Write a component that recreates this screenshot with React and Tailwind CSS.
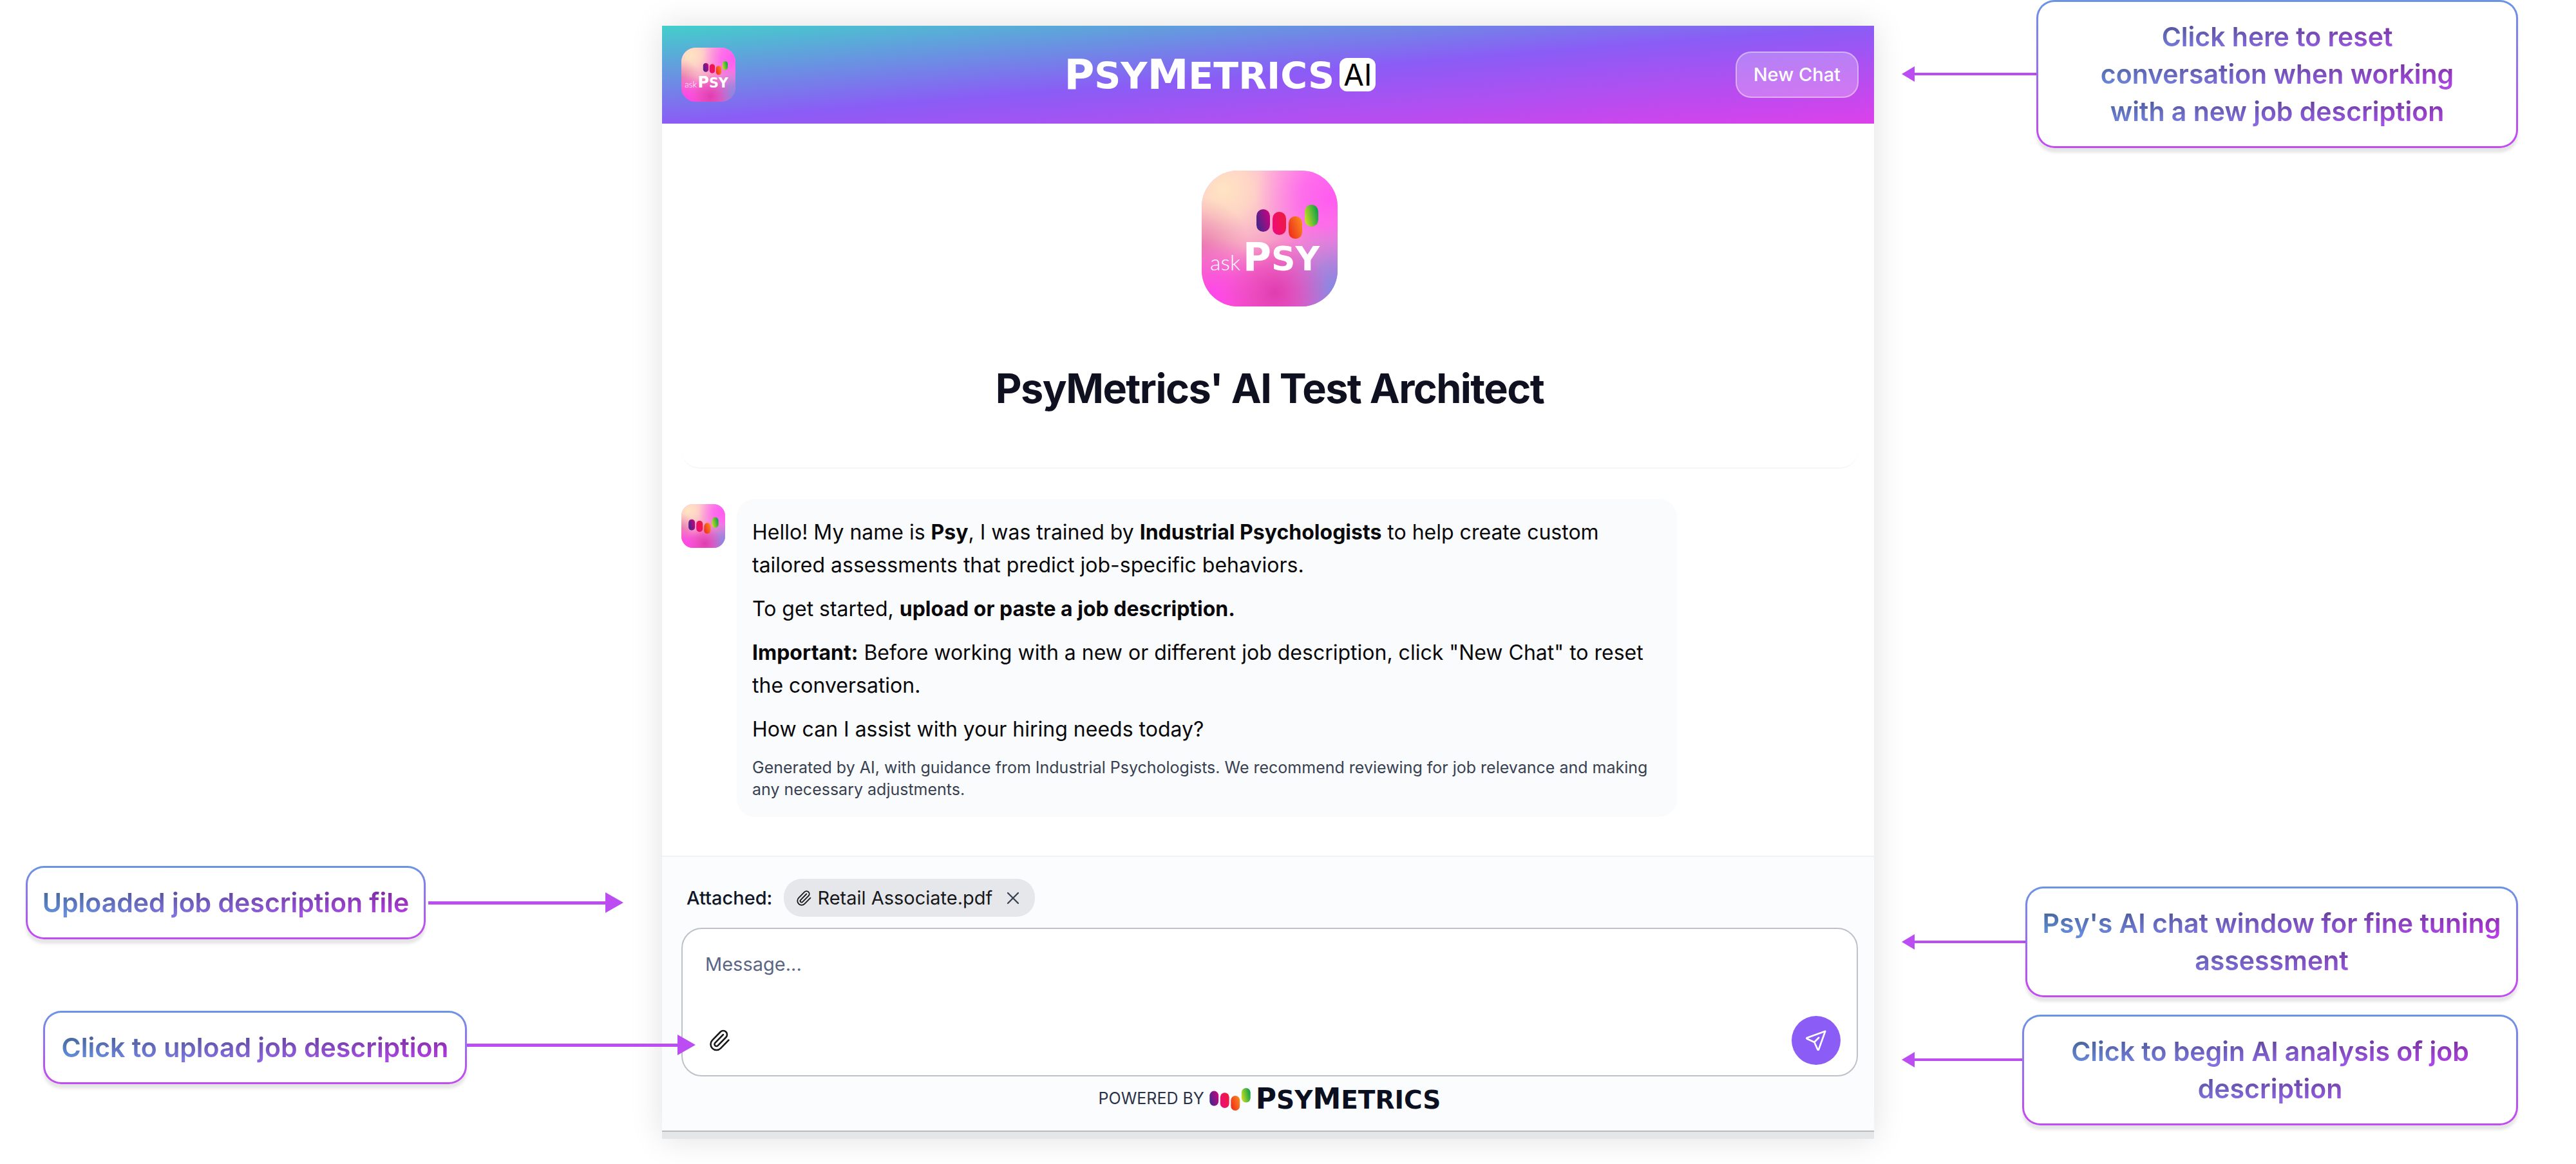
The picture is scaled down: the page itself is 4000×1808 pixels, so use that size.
import { Paperclip, X } from "lucide-react"

const Pills = () => (
  <g>
    <rect x="85" y="60" width="21" height="35" rx="10.5" fill="url(#pillPurple)" />
    <rect x="110" y="64" width="21" height="36" rx="10.5" fill="url(#pillRed)" />
    <rect x="135" y="71" width="21" height="35" rx="10.5" fill="url(#pillOrange)" />
    <rect x="160" y="53" width="21" height="34" rx="10.5" fill="url(#pillGreen)" />
  </g>
)

// gradients shared by every logo on the page
const LogoDefs = () => (
  <svg width="0" height="0" className="absolute" aria-hidden="true">
    <defs>
      <linearGradient id="pillPurple" x1="0" y1="0.8" x2="1" y2="0.3">
        <stop offset="0" stopColor="#3b2a8c" />
        <stop offset="1" stopColor="#c4047f" />
      </linearGradient>
      <linearGradient id="pillRed" x1="0" y1="0.8" x2="1" y2="0.2">
        <stop offset="0" stopColor="#ee0a7c" />
        <stop offset="1" stopColor="#ee1c3c" />
      </linearGradient>
      <linearGradient id="pillOrange" x1="0" y1="0.8" x2="1" y2="0.2">
        <stop offset="0" stopColor="#ee2a1c" />
        <stop offset="1" stopColor="#f98a1e" />
      </linearGradient>
      <linearGradient id="pillGreen" x1="0" y1="0.8" x2="1" y2="0.4">
        <stop offset="0" stopColor="#d3e022" />
        <stop offset="1" stopColor="#0fa047" />
      </linearGradient>
      <linearGradient id="tileBase" x1="0" y1="0" x2="0" y2="1">
        <stop offset="0" stopColor="#fd9be0" />
        <stop offset="0.5" stopColor="#f391c4" />
        <stop offset="1" stopColor="#f84fd0" />
      </linearGradient>
      <radialGradient id="tilePeach" cx="0.16" cy="0.14" r="0.65">
        <stop offset="0" stopColor="#ffe4c2" />
        <stop offset="0.3" stopColor="#ffdcc4" stopOpacity="0.9" />
        <stop offset="1" stopColor="#ffc8d0" stopOpacity="0" />
      </radialGradient>
      <radialGradient id="tilePink" cx="0.95" cy="0.2" r="0.55">
        <stop offset="0" stopColor="#ff5cf0" />
        <stop offset="0.4" stopColor="#ff66ee" stopOpacity="0.85" />
        <stop offset="1" stopColor="#ff7be8" stopOpacity="0" />
      </radialGradient>
      <radialGradient id="tileRose" cx="0" cy="0.55" r="0.35">
        <stop offset="0" stopColor="#e0609f" stopOpacity="0.6" />
        <stop offset="1" stopColor="#e0709f" stopOpacity="0" />
      </radialGradient>
      <radialGradient id="tileCorner" cx="0.08" cy="0.95" r="0.45">
        <stop offset="0" stopColor="#ff45ea" />
        <stop offset="1" stopColor="#ff50e4" stopOpacity="0" />
      </radialGradient>
      <radialGradient id="tileMagenta" cx="0.54" cy="0.9" r="0.4">
        <stop offset="0" stopColor="#df3db0" />
        <stop offset="1" stopColor="#e84bb4" stopOpacity="0" />
      </radialGradient>
      <radialGradient id="tileBlue" cx="1" cy="0.88" r="0.5">
        <stop offset="0" stopColor="#7f8ae2" />
        <stop offset="0.4" stopColor="#9b86e0" stopOpacity="0.8" />
        <stop offset="1" stopColor="#c884e0" stopOpacity="0" />
      </radialGradient>
    </defs>
  </svg>
)

const PsyTile = ({ className, label = true }) => (
  <svg viewBox="0 0 211 211" className={className} role="img" aria-label="askPsy">
    <rect width="211" height="211" rx="56" fill="url(#tileBase)" />
    <rect width="211" height="211" rx="56" fill="url(#tilePeach)" />
    <rect width="211" height="211" rx="56" fill="url(#tilePink)" />
    <rect width="211" height="211" rx="56" fill="url(#tileRose)" />
    <rect width="211" height="211" rx="56" fill="url(#tileCorner)" />
    <rect width="211" height="211" rx="56" fill="url(#tileBlue)" />
    <rect width="211" height="211" rx="56" fill="url(#tileMagenta)" />
    {label ? (
      <>
        <Pills />
        <text x="13" y="155" fill="#fff" fontFamily="Lato, sans-serif" fontWeight="300" fontSize="34">
          ask
        </text>
        <text x="64" y="155" fill="#fff" fontFamily="'DejaVu Sans', sans-serif" fontWeight="700" fontSize="60">
          P<tspan fontSize="52">SY</tspan>
        </text>
      </>
    ) : (
      <g transform="translate(-93 -16) scale(1.5)">
        <Pills />
      </g>
    )}
  </svg>
)

const SendIcon = ({ className }) => (
  <svg
    viewBox="0 0 24 24"
    className={className}
    fill="none"
    stroke="currentColor"
    strokeWidth="1.8"
    strokeLinecap="round"
    strokeLinejoin="round"
    aria-hidden="true"
  >
    <path d="M21.5 2.5 2.6 9.3a.6.6 0 0 0 0 1.1l7.6 3.4 3.4 7.6a.6.6 0 0 0 1.1 0z" />
    <path d="m10.2 13.8 4.6-4.6" />
  </svg>
)

const Wordmark = ({ className, smallClass }) => (
  <span className={`font-['DejaVu_Sans',sans-serif] leading-none font-bold ${className}`}>
    P<span className={smallClass}>SY</span>M<span className={smallClass}>ETRICS</span>
  </span>
)

const Callout = ({ className, children }) => (
  <div
    className={`shrink-0 rounded-[28px] border-3 border-transparent px-4 text-center shadow-[0_7px_4px_rgba(0,0,0,0.1)] [background:linear-gradient(#fff,#fff)_padding-box,linear-gradient(#6b94e3,#8b7be8_35%,#c04df0_90%)_border-box] ${className}`}
  >
    <p className="bg-[linear-gradient(rgba(0,0,0,0.3)_20%,transparent_80%),linear-gradient(to_right,#6295dc,#8b66e0_50%,#b93be6)] bg-[length:100%_58px,100%_100%] bg-clip-text text-[41px] leading-[58px] font-semibold text-transparent">
      {children}
    </p>
  </div>
)

const ArrowLeft = ({ className = "" }) => (
  <div className={`flex flex-1 items-center ${className}`} aria-hidden="true">
    <span className="h-6 w-5 bg-[#bb4df2] [clip-path:polygon(100%_0,0_50%,100%_100%)]" />
    <span className="h-1 flex-1 bg-[#bb4df2]" />
  </div>
)

const ArrowRight = ({ className }) => (
  <div className={`relative z-10 flex flex-1 items-center ${className}`} aria-hidden="true">
    <span className="h-[5px] flex-1 bg-[#bb4df2]" />
    <span className="h-8 w-7 bg-[#bb4df2] [clip-path:polygon(0_0,100%_50%,0_100%)]" />
  </div>
)

const ChatHeader = () => (
  <header className="flex items-center justify-between bg-[linear-gradient(to_bottom_right,#43cfcb,#8b5cf6_50%,#dc40ea)] py-[34px] pr-6 pl-[30px]">
    <PsyTile className="size-[84px]" />
    <div className="flex items-center gap-2 pr-12 text-white">
      <Wordmark className="text-[64px]" smallClass="text-[57px]" />
      <span className="rounded-xl bg-white px-1.5 text-[46px] leading-[52px] text-black">AI</span>
    </div>
    <button
      type="button"
      className="rounded-3xl border-2 border-white/40 bg-white/25 px-[26px] py-4 text-[29px] leading-9 font-medium text-white"
    >
      New Chat
    </button>
  </header>
)

const Message = () => (
  <div className="flex items-start gap-[18px]">
    <PsyTile className="mt-2 size-[68px] shrink-0" label={false} />
    <div className="w-full max-w-[1460px] space-y-[17px] rounded-[28px] bg-[#fafbfd] px-6 py-[26px] text-[32px] leading-[51px] text-[#09090b]">
      <p>
        Hello! My name is <strong>Psy</strong>, I was trained by <strong>Industrial Psychologists</strong> to help
        create custom
        <br />
        tailored assessments that predict job-specific behaviors.
      </p>
      <p>
        To get started, <strong>upload or paste a job description.</strong>
      </p>
      <p>
        <strong>Important:</strong> Before working with a new or different job description, click "New Chat" to reset
        <br />
        the conversation.
      </p>
      <p>How can I assist with your hiring needs today?</p>
      <p className="text-[25px] leading-[34px] text-[#374151]">
        Generated by AI, with guidance from Industrial Psychologists. We recommend reviewing for job relevance and
        making
        <br />
        any necessary adjustments.
      </p>
    </div>
  </div>
)

const Composer = () => (
  <form className="border-t-2 border-b-2 border-t-[#f1f2f5] border-b-[#bbbcba] bg-[#fbfcfe] pt-[34px] pr-[25px] pb-[29px] pl-[30px]">
    <div className="flex items-center gap-[18px] pl-2 text-[29px] leading-[35px]">
      <span className="font-medium text-[#111827]">Attached:</span>
      <div className="flex items-center gap-2 rounded-[28px] bg-[#e5e7eb] px-[18px] py-3 text-[#18181b]">
        <Paperclip className="size-[26px]" strokeWidth={1.7} />
        <span>Retail Associate.pdf</span>
        <button type="button" aria-label="Remove attachment" className="ml-2">
          <X className="size-8 text-[#374151]" strokeWidth={1.7} />
        </button>
      </div>
    </div>
    <div className="mt-[17px] rounded-[32px] border-2 border-[#bfc1c9] bg-white pt-[30px] pr-[25px] pb-4 pl-[35px]">
      <textarea
        rows={2}
        aria-label="Message"
        placeholder="Message..."
        className="block w-full resize-none text-[29px] leading-[50px] outline-none placeholder:text-[#5b6684]"
      />
      <div className="mt-[5px] flex items-center justify-between">
        <button type="button" aria-label="Attach file" className="pl-1">
          <Paperclip className="size-9 text-[#18181b]" strokeWidth={1.7} />
        </button>
        <button
          type="submit"
          aria-label="Send"
          className="flex size-[76px] items-center justify-center rounded-full bg-[#8b5cf6]"
        >
          <SendIcon className="size-9 text-white" />
        </button>
      </div>
    </div>
    <div className="mt-[15px] flex h-10 items-center justify-center gap-2 text-[#0b1020]">
      <span className="text-[25px] text-[#2b3247]">POWERED BY</span>
      <svg viewBox="85 53 96 53" className="h-[35px] w-[64px]" aria-hidden="true">
        <Pills />
      </svg>
      <Wordmark className="text-[44px]" smallClass="text-[39px]" />
    </div>
  </form>
)

const App = () => {
  return (
    <div className="grid grid-cols-[1028fr_1882fr_1090fr] bg-white font-[Inter,sans-serif]">
      <LogoDefs />

      <aside className="flex flex-col justify-end gap-[111px] pb-[124px]">
        <div className="flex items-center pl-10">
          <Callout className="w-[621px] py-[25px]">Uploaded job description file</Callout>
          <ArrowRight className="mr-[60px] ml-1" />
        </div>
        <div className="flex items-center pl-[67px]">
          <Callout className="w-[658px] py-[25px]">Click to upload job description</Callout>
          <ArrowRight className="-mr-[52px] pb-2" />
        </div>
      </aside>

      <main className="mt-10 mb-[39px] border-b-[11px] border-[#e5e6e8] bg-white shadow-[0_0_48px_rgba(0,0,0,0.12)]">
        <ChatHeader />
        <div className="pr-[25px] pb-[60px] pl-[30px]">
          <section className="flex flex-col items-center rounded-b-[28px] border-b-2 border-[#f6f6f8] pt-[73px] pb-[84px]">
            <PsyTile className="size-[211px]" />
            <h1 className="mt-[88px] text-[63px] leading-[78px] font-bold tracking-tight text-[#0f1120]">
              PsyMetrics' AI Test Architect
            </h1>
          </section>
          <div className="pt-[47px]">
            <Message />
          </div>
        </div>
        <Composer />
      </main>

      <aside className="flex flex-col gap-[27px] pr-[90px] pb-[60px] pl-[43px]">
        <div className="mb-auto flex items-center">
          <ArrowLeft />
          <Callout className="w-[748px] py-[25px]">
            Click here to reset
            <br />
            conversation when working
            <br />
            with a new job description
          </Callout>
        </div>
        <div className="flex items-center">
          <ArrowLeft />
          <Callout className="w-[765px] py-[25px]">
            Psy's AI chat window for fine tuning
            <br />
            assessment
          </Callout>
        </div>
        <div className="flex items-center">
          <ArrowLeft className="pb-8" />
          <Callout className="w-[770px] py-[25px]">
            Click to begin AI analysis of job
            <br />
            description
          </Callout>
        </div>
      </aside>
    </div>
  )
}

export default App
